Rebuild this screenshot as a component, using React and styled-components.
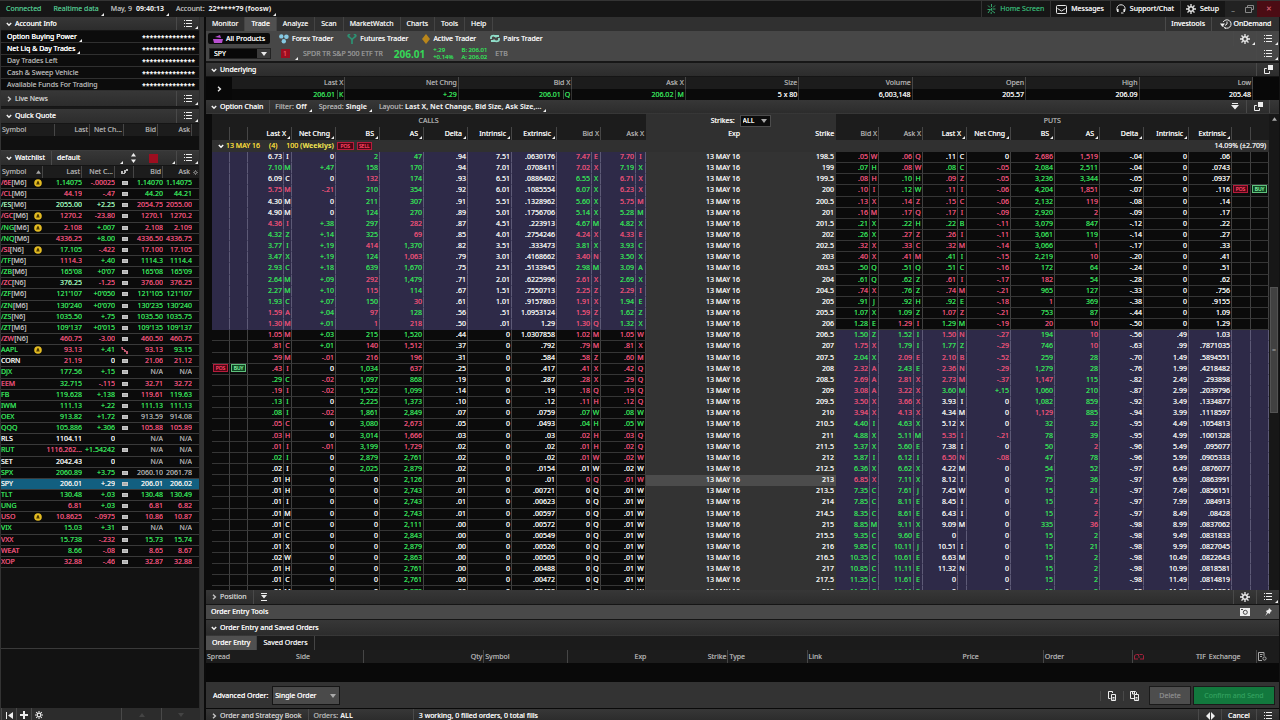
import React, { useState } from "react";
import styled, { createGlobalStyle, css } from "styled-components";

const GREEN = "#35d957";
const RED = "#e04f76";
const WHITE = "#ebebeb";
const MUTED = "#a4a4a4";
const TONES = { g: GREEN, r: RED, w: WHITE, m: MUTED, l: "#9be8b4" };

const GlobalStyle = createGlobalStyle`
  * { box-sizing: border-box; }
  body {
    margin: 0;
    background: #111;
    color: ${WHITE};
    font-family: "Noto Sans", "Open Sans", sans-serif;
    font-size: 7px;
    line-height: 10px;
    text-shadow: 0 0 0 currentColor;
    overflow: hidden;
  }
  b, strong { text-shadow: none; }
  button, input, select { font: inherit; color: inherit; text-shadow: inherit; margin: 0; padding: 0; border: 0; background: none; }
  button { cursor: pointer; white-space: nowrap; }
  table { border-collapse: separate; border-spacing: 0; table-layout: fixed; width: 100%; }
  th, td { padding: 0; font-weight: normal; white-space: nowrap; overflow: hidden; }
  svg { display: block; flex: none; }
`;

const Screen = styled.div`
  display: flex;
  flex-direction: column;
  height: 100vh;
`;

const corner = css`
  position: relative;
  &::after {
    content: "";
    position: absolute;
    right: 1px;
    bottom: 1px;
    border-left: 3px solid transparent;
    border-bottom: 3px solid #eee;
  }
`;

const TopBar = styled.header`
  display: flex;
  flex: none;
  height: 17px;
  border-top: 1px solid #343434;
  background: #161616;
`;

const TopItem = styled.button`
  display: flex;
  align-items: center;
  gap: 4px;
  padding: 0 6px 0 5px;
  color: ${(p) => p.$color || "#e8e8e8"};
  border-left: 1px solid ${(p) => (p.$line ? "#333" : "transparent")};
  ${(p) => p.$corner && corner}
  b { color: #eee; }
`;

const WindowButton = styled.button`
  display: flex;
  align-items: center;
  justify-content: center;
  width: ${(p) => (p.$close ? 23 : 16)}px;
  color: ${(p) => (p.$close ? "#c05565" : "#888")};
  background: ${(p) => (p.$close ? "#4b0c14" : "#222")};
`;

const Spacer = styled.div`
  flex: 1;
`;

const Columns = styled.div`
  display: flex;
  flex: 1;
  min-height: 0;
`;

const Sidebar = styled.aside`
  display: flex;
  flex-direction: column;
  flex: none;
  width: 200px;
  border-left: 1px solid #333;
  border-right: 1px solid #2c2c2c;
  background: #121212;
`;

const Divider = styled.div`
  flex: none;
  width: 6px;
  background: #333;
  border-right: 2px solid #0b0b0b;
`;

const Main = styled.main`
  display: flex;
  flex-direction: column;
  flex: 1;
  min-width: 0;
  padding-right: 1px;
`;

const Head = styled.div`
  display: flex;
  flex: none;
  height: ${(p) => p.$h || 15}px;
  border-bottom: 1px solid ${(p) => (p.$flat ? "transparent" : "#151515")};
  background: ${(p) => p.$bg || "linear-gradient(#373737, #2c2c2c)"};
`;

const HeadTitle = styled.button`
  display: flex;
  align-items: center;
  gap: 3px;
  padding: 0 6px 0 5px;
  color: ${(p) => (p.$dim ? "#c4c4c4" : "#f2f2f2")};
`;

const HeadItem = styled.button`
  display: flex;
  align-items: center;
  gap: 2px;
  padding: 0 6px 0 5px;
  flex: ${(p) => (p.$grow ? 1 : "none")};
  color: ${(p) => (p.$bright ? "#eee" : "#a8a8a8")};
  b { color: #eee; }
  border-left: 1px solid ${(p) => (p.$line ? "#4a4a4a" : "transparent")};
  ${(p) => p.$corner && corner}
`;

const IconButton = styled.button`
  display: flex;
  align-items: center;
  justify-content: center;
  width: ${(p) => p.$w || 23}px;
  color: ${(p) => p.$color || "#eee"};
  border-left: 1px solid ${(p) => p.$line || "#494949"};
  ${(p) => p.$corner && corner}
`;

const AccountList = styled.dl`
  flex: none;
  margin: 0;
  background: #0c0c0c;
`;

const AccountRow = styled.div`
  display: flex;
  align-items: center;
  justify-content: space-between;
  height: 12px;
  padding: 0 4px 0 6px;
  border-bottom: 1px solid #303030;
  color: ${(p) => (p.$bright ? "#fff" : MUTED)};
  dt { padding-right: 5px; ${(p) => p.$bright && corner} }
  dt::after { right: 0; bottom: 0; }
  dd { margin: 0; color: #fff; line-height: 9px; padding-top: 2px; }
`;

const HeaderCell = styled.th`
  height: ${(p) => p.$h || 12}px;
  padding: 0 ${(p) => (p.$corner ? 5 : 1)}px 0 1px;
  color: ${(p) => (p.$bright ? "#eee" : MUTED)};
  text-align: ${(p) => p.$align || "right"};
  background: ${(p) => p.$bg || "#1c1c1c"};
  border-right: 1px solid ${(p) => (p.$line ? "#464646" : "transparent")};
  svg { display: inline-block; vertical-align: middle; }
  ${(p) => p.$corner && corner}
`;

const QuickBody = styled.div`
  flex: none;
  height: 15px;
  background: #101010;
  border-bottom: 1px solid #3c3c3c;
`;

const Gap = styled.div`
  flex: none;
  height: 2px;
  background: #181818;
`;

const WatchTable = styled.table`
  height: 402px;
  flex: none;
  background: #0b0b0b;
  td { border-bottom: 1px solid #3a3a3a; line-height: 10px; }
`;

const WatchCell = styled.td`
  text-align: ${(p) => p.$align || "right"};
  color: ${(p) => TONES[p.$tone] || "inherit"};
  background: ${(p) => (p.$selected ? "#125f80" : "transparent")};
  span { color: #b4b4b4; }
  svg { margin: 0 auto; }
`;

const SideFill = styled.div`
  flex: 1;
  border-bottom: 1px solid #3a3a3a;
`;

const SideFoot = styled.div`
  flex: none;
  height: 59px;
`;

const SideTools = styled.div`
  display: flex;
  flex: none;
  height: 12px;
  background: #2c2c2c;
  overflow: hidden;
  > button { height: 14px; }
`;

const Tab = styled.button`
  padding: 0 6px;
  color: ${(p) => (p.$on ? "#f2f2f2" : "#e4e4e4")};
  background: ${(p) => (p.$on ? "#505050" : "transparent")};
  border-right: 1px solid #444;
`;

const ToolRow = styled.div`
  display: flex;
  flex: none;
  align-items: stretch;
  height: ${(p) => p.$h}px;
  background: ${(p) => p.$bg};
  border-bottom: ${(p) => (p.$last ? "2px solid #171717" : "0")};
`;

const Product = styled.button`
  display: flex;
  align-items: center;
  gap: 3px;
  margin: 2px 2px 2px 2px;
  padding: 0 5px 0 5px;
  border-radius: 2px;
  color: #eee;
  background: ${(p) => (p.$on ? "#0b0b0b" : "transparent")};
`;

const SymbolBox = styled.div`
  display: flex;
  margin: 2px 0 2px 3px;
  width: 62px;
  background: #080808;
  border: 1px solid #222;
  input { flex: 1; width: 20px; padding-left: 4px; outline: none; }
  button { width: 13px; background: #3b3b3b; display: flex; align-items: center; justify-content: center; }
`;

const RedLink = styled.button`
  align-self: center;
  width: 9px;
  height: 9px;
  background: #9c0e20;
  color: #e64a58;
  line-height: 9px;
  text-align: center;
`;

const SymbolLink = styled.span`
  display: flex;
  justify-content: center;
  width: 28px;
  ${corner}
`;

const Quote = styled.div`
  display: flex;
  align-items: center;
  gap: 8px;
  padding-left: 4px;
  color: #929292;
  strong { color: ${GREEN}; font-size: 10px; padding-left: 3px; }
`;

const Stack = styled.div`
  display: flex;
  flex-direction: column;
  color: ${GREEN};
  font-size: 6px;
  line-height: 7px;
`;

const Underlying = styled.div`
  display: flex;
  flex: none;
  height: 23px;
  background: #080808;
  td { height: 11px; text-align: right; color: ${WHITE}; padding-right: 1px; background: #0a0a0a; border-right: 1px solid #333; }
  td.up { color: ${GREEN}; }
  td i { font-style: normal; border-left: 1px solid #3b5a40; padding-left: 1px; margin-left: 2px; }
`;

const UnderSide = styled.button`
  flex: none;
  display: flex;
  align-items: center;
  justify-content: center;
  width: 26px;
`;

const Chain = styled.div`
  display: flex;
  flex: 1;
  min-height: 0;
  padding-left: 6px;
  background: #0b0b0b;
`;

const ChainTables = styled.div`
  display: flex;
  flex-direction: column;
  flex: 1;
  min-width: 0;
`;

const StrikePick = styled.label`
  display: flex;
  align-items: center;
  justify-content: center;
  gap: 5px;
  color: #eee;
`;

const SelectBox = styled.span`
  position: relative;
  display: inline-flex;
  align-items: center;
  width: ${(p) => p.$w}px;
  height: ${(p) => p.$h}px;
  background: ${(p) => p.$bg};
  border: 1px solid ${(p) => p.$edge};
  select { appearance: none; width: 100%; height: 100%; padding-left: 2px; outline: none; }
  svg { position: absolute; right: 3px; top: calc(50% - 2px); pointer-events: none; color: #aaa; }
`;

const Expiry = styled.div`
  display: flex;
  flex: none;
  align-items: center;
  height: 12px;
  padding: 0 3px 0 6px;
  background: #303030;
  color: #ecd43a;
  button { display: flex; align-items: center; gap: 2px; color: #ecd43a; }
  button svg { color: #fff; }
  b { color: #f3e550; }
  em { margin-left: auto; color: #e4e4e4; font-style: normal; }
`;

const ExpiryParts = styled.span`
  display: flex;
  gap: 9px;
  margin-right: 2px;
`;

const Badge = styled.button`
  && {
    display: inline-block;
    vertical-align: top;
    width: ${(p) => p.$w || 15}px;
    height: 8px;
    margin: 0 2px 0 1px;
    border: 1px solid ${(p) => (p.$buy ? "#5fc07c" : "#b81c3c")};
    background: ${(p) => (p.$buy ? "#0d4421" : "#4c0715")};
    color: ${(p) => (p.$buy ? "#7fe39c" : "#f0405f")};
    font-size: 5px;
    line-height: 6px;
    text-align: center;
  }
`;

const ChainView = styled.div`
  flex: 1;
  min-height: 0;
  overflow: hidden;
`;

const ChainTable = styled.table`
  height: 446px;
  tr { height: 11px; }
`;

const zones = {
  itm: ["#2e2a48", "#2e2a48", "#5d5a76"],
  otm: ["#0b0b0b", "#363636", "#414141"],
  mid: ["#333", "#333", "#333"],
  hot: ["#4c4c4c", "#4c4c4c", "#4c4c4c"],
};

const Cell = styled.td`
  line-height: 10px;
  text-align: ${(p) => (p.$center ? "center" : "right")};
  padding-right: ${(p) => (p.$center ? 0 : 1)}px;
  color: ${(p) => TONES[p.$tone || "w"]};
  background: ${(p) => zones[p.$zone][0]};
  border-bottom: 1px solid ${(p) => zones[p.$zone][1]};
  border-right: 1px solid ${(p) => zones[p.$zone][2]};
`;

const Scroll = styled.div`
  flex: none;
  display: flex;
  flex-direction: column;
  align-items: center;
  width: 10px;
  background: #171717;
  padding-top: 3px;
  color: #aaa;
`;

const Thumb = styled.div`
  width: 8px;
  height: 126px;
  margin-top: 166px;
  background: #414141;
  border: 1px solid #535353;
  display: flex;
  align-items: center;
  justify-content: center;
  color: #888;
`;

const OrderBody = styled.div`
  flex: none;
  height: 19px;
  background: #090909;
`;

const Advanced = styled.div`
  display: flex;
  flex: none;
  align-items: center;
  height: 27px;
  padding: 1px 4px 0 7px;
  background: #333;
  border-bottom: 1px solid #0a0a0a;
  label { display: flex; align-items: center; gap: 4px; color: #f2f2f2; }
`;

const ActionButton = styled.button`
  width: ${(p) => p.$w}px;
  height: 19px;
  margin-left: ${(p) => (p.$send ? 2 : 3)}px;
  border: 1px solid #1a1a1a;
  background: ${(p) => (p.$send ? "#12783d" : "#4d4d4d")};
  color: ${(p) => (p.$send ? "#2d9a59" : "#868686")};
`;

const Status = styled(Head)`
  height: 11px;
  border: 0;
  overflow: hidden;
  align-items: flex-start;
  > button { height: 14px; }
`;

const StatusGap = styled.span`
  width: 54px;
`;

/* icons */

const Chevron = ({ right }) => (
  <svg width="6" height="6" viewBox="0 0 6 6" fill="none" stroke="currentColor" strokeWidth="1.4">
    <path d={right ? "M2 .8 4.4 3 2 5.2" : "M.8 2 3 4.3 5.2 2"} />
  </svg>
);

const Arrow = ({ up, size = 6 }) => (
  <svg width={size} height="4" viewBox="0 0 6 4" fill="currentColor">
    <path d={up ? "M0 4 3 0 6 4z" : "M0 0h6L3 4z"} />
  </svg>
);

const ToStrike = () => (
  <svg width="8" height="7" viewBox="0 0 8 7" fill="currentColor">
    <path d="M1 0h6v1H1zM0 2h8L4 6.5z" />
  </svg>
);

const ListIcon = () => (
  <svg width="8" height="8" viewBox="0 0 8 8" fill="currentColor">
    <path d="M0 0h1v1H0zM2 0h6v1H2zM0 3h1v1H0zM2 3h6v1H2zM0 6h1v1H0zM2 6h6v1H2z" />
  </svg>
);

const Gear = ({ size = 10 }) => (
  <svg width={size} height={size} viewBox="0 0 10 10" fill="none" stroke="currentColor">
    <circle cx="5" cy="5" r="2.3" strokeWidth="1.5" />
    <path d="M5 0v2M5 8v2M0 5h2M8 5h2M1.5 1.5l1.3 1.3M7.2 7.2l1.3 1.3M8.5 1.5 7.2 2.8M2.8 7.2 1.5 8.5" strokeWidth="1.3" />
  </svg>
);

const Popout = () => (
  <svg width="9" height="9" viewBox="0 0 9 9" fill="none" stroke="currentColor">
    <path d="M4 0h5v5H4z" fill="currentColor" stroke="none" />
    <path d="M2.8 3.5H.5v5h5V6.2" />
  </svg>
);

const RestoreIcon = () => (
  <svg width="9" height="8" viewBox="0 0 9 8" fill="none" stroke="currentColor">
    <path d="M2.5 2.5v-2h6v4h-2M.5 2.5h6v5h-6z" />
  </svg>
);

const Walker = () => (
  <svg width="9" height="10" viewBox="0 0 9 10" fill="none" stroke="currentColor">
    <path d="M4.5 0v3M1 1.5l2 2M8 1.5l-2 2M.5 5.5h3L1 9M4.5 4v2.5L8 9M5.5 5h3M4.2 8v2" />
  </svg>
);

const Mail = () => (
  <svg width="11" height="9" viewBox="0 0 11 9" fill="none" stroke="currentColor">
    <rect x=".5" y=".5" width="10" height="8" rx="1" />
    <path d="m1.5 3.5 4 2.5 4-2.5" />
  </svg>
);

const Headset = () => (
  <svg width="10" height="10" viewBox="0 0 10 10" fill="none" stroke="currentColor">
    <path d="M1.7 7.5C0 5 1 .8 5 .8S10 5 8.3 7.5" />
    <path d="M1.8 5v3M8.2 5v3" strokeWidth="1.6" />
    <path d="M7.5 9H5" />
  </svg>
);

const Clock = () => (
  <svg width="12" height="10" viewBox="0 0 12 10" fill="none" stroke="currentColor">
    <path d="M3.5 7.5A4.2 4.2 0 1 0 3.2 3M7 2.5V5L5 6.5M4.5 9l1.3.6" />
    <path d="M0 4.5h5L2.4 8z" fill="currentColor" stroke="none" />
  </svg>
);

const LinkDots = () => (
  <svg width="7" height="6" viewBox="0 0 7 6" fill="#bbb">
    <path d="M0 2h2v3H0zM3 1h2v3H3zM5 0h2v2H5zM1 4h3v1H1z" />
  </svg>
);

const BrokenLink = () => (
  <svg width="7" height="7" viewBox="0 0 7 7" fill="#c25a72">
    <path d="M0 0h2v2h2v1h1v1h2v3H5V5H3V3H1z" />
  </svg>
);

const Dash = () => (
  <svg width="6" height="4" viewBox="0 0 6 4">
    <path d="M0 0h6v4H0z" fill="#c8c8c8" />
    <path d="M1 2h4" stroke="#777" strokeWidth=".6" />
  </svg>
);

const Bell = () => (
  <svg width="8" height="8" viewBox="0 0 8 8">
    <circle cx="4" cy="4" r="3.8" fill="#e3bb22" />
    <path d="M2 5.6c1-.6.7-3.6 2-3.6s1 3 2 3.6z" fill="#4c3900" />
  </svg>
);

const AllIcon = () => (
  <svg width="10" height="10" viewBox="0 0 10 10" fill="#b84fd0">
    <path d="M0 5h10l-1 4H1zM2 3l5-2 1 3z" />
  </svg>
);

const ForexIcon = () => (
  <svg width="10" height="10" viewBox="0 0 10 10" fill="#86c8e2">
    <circle cx="2.3" cy="2.4" r="2.2" />
    <circle cx="7.4" cy="2.8" r="2.3" />
    <circle cx="4.8" cy="7.2" r="2.2" />
  </svg>
);

const FuturesIcon = () => (
  <svg width="10" height="10" viewBox="0 0 10 10" fill="none" stroke="#2d9273" strokeWidth="1.7">
    <path d="M1 1.2C1 4 5 3 5 6.5V10M9 1.2C9 4 5 3 5 6.5M3 0 1 1.5M7 0l2 1.5" />
  </svg>
);

const ActiveIcon = () => (
  <svg width="8" height="10" viewBox="0 0 8 10" fill="#b9861b">
    <path d="m4 0 4 5-4 5-4-5z" />
  </svg>
);

const PairsIcon = () => (
  <svg width="10" height="9" viewBox="0 0 10 9" fill="none" stroke="#8fdcc8" strokeWidth="1.8">
    <path d="M1 5V3.5C1 1 6 1 6 3.5M9 4v1.5C9 8 4 8 4 5.5M4 2h5M1 7h4" />
  </svg>
);

const CopyIcon = ({ save }) => (
  <svg width="10" height="10" viewBox="0 0 10 10" fill="none" stroke="currentColor">
    <path d={save ? "M4 7.5H.5v-7h5l1 1V3M2.5.5V3h2V.5" : "M3.5 7.5h-2v-7h4V2"} />
    <path d="M4.5 3.5h4v6h-4zM5.5 6.5h2M5.5 8h2" />
  </svg>
);

const Camera = () => (
  <svg width="10" height="8" viewBox="0 0 10 8">
    <path d="M0 0h10v8H0z" fill="#eee" />
    <circle cx="5.3" cy="4.3" r="2" fill="none" stroke="#444" />
    <path d="M1 1.5h2" stroke="#444" />
  </svg>
);

const Pin = () => (
  <svg width="7" height="8" viewBox="0 0 7 8" fill="currentColor">
    <path d="M4 0l3 3-1.3.4L4.6 6 3 4.9.4 8 2 4.3.8 3l2.7-1.3z" />
  </svg>
);

const NoteIcon = () => (
  <svg width="9" height="9" viewBox="0 0 9 9" fill="none" stroke="#aaa">
    <path d="M4 8.5H.5v-8H6V4M2 2.5h2.5M2 4.5h2" />
    <circle cx="6.5" cy="6.5" r="1.6" />
  </svg>
);

const RedBadgeIcon = () => (
  <svg width="10" height="7" viewBox="0 0 10 7" fill="none" stroke="#a3213b">
    <path d="M.5 6V2.5l2-1h2V3M5.5 1.5h3l1 1V6M0 6h4M6 6h4M4 4h2" />
  </svg>
);

/* data */

const STARS = "**************";

const ACCOUNT = [
  ["Option Buying Power", true],
  ["Net Liq & Day Trades", true],
  ["Day Trades Left", false],
  ["Cash & Sweep Vehicle", false],
  ["Available Funds For Trading", false],
];

const rows = (text) => text.trim().split("\n").map((line) => line.split("|"));

// symbol | contract | alert | last | change | link | bid | ask, each value led by its tone
const WATCH = rows(`
r/6E|[M6]|a|g1.14075|r-.00025|d|g1.14070|g1.14075
r/CL|[M6]||r44.19|r-.47|d|g44.20|g44.21
l/ES|[M6]||l2055.00|l+2.25|d|r2054.75|r2055.00
r/GC|[M6]|a|r1270.2|r-23.80|d|r1270.1|r1270.2
g/NG|[M6]|a|r2.108|g+.007|d|r2.108|r2.109
g/NQ|[M6]||r4336.25|g+8.00|d|r4336.50|r4336.75
r/SI|[N6]|a|g17.105|r-.422|d|r17.100|r17.105
g/TF|[M6]||r1114.3|g+.40|d|g1114.3|g1114.4
g/ZB|[M6]||g165'08|g+0'07|d|g165'08|g165'09
r/ZC|[N6]||l376.25|r-1.25|d|r376.00|r376.25
g/ZF|[M6]||g121'107|g+0'050|d|g121'105|g121'107
g/ZN|[M6]||g130'240|g+0'070|d|g130'235|g130'240
g/ZS|[N6]||g1035.50|g+.75|d|g1035.50|g1035.75
g/ZT|[M6]||g109'137|g+0'015|d|g109'135|g109'137
r/ZW|[N6]||r460.75|r-3.00|d|r460.50|r460.75
gAAPL||a|r93.13|g+.41|b|r93.13|g93.15
wCORN|||r21.19|w0|d|r21.06|r21.12
gDJX|||g177.56|g+.15|d|mN/A|mN/A
rEEM|||g32.715|r-.115|d|r32.71|r32.72
gFB|||g119.628|g+.138|d|r119.61|g119.63
gIWM|||g111.13|g+.22|d|g111.13|g111.13
gOEX|||g913.82|g+1.72|d|m913.59|m914.08
gQQQ|||g105.886|g+.306|d|r105.88|r105.89
wRLS|||w1104.11|w0||mN/A|mN/A
gRUT|||r1116.262...|g+1.54242|d|mN/A|mN/A
wSET|||w2042.43|w0||mN/A|mN/A
gSPX|||g2060.89|g+3.75|d|m2060.10|m2061.78
wSPY|||w206.01|w+.29|d|w206.01|w206.02
gTLT|||g130.48|g+.03|d|g130.48|g130.49
gUNG|||r6.81|g+.03|d|r6.81|r6.82
rUSO||a|r10.8625|r-.0975|d|r10.86|r10.87
gVIX|||g15.03|g+.31|d|mN/A|mN/A
rVXX|||g15.738|r-.232|d|g15.73|g15.74
rWEAT|||g8.66|r-.08|d|r8.65|r8.67
rXOP|||r32.88|r-.46|d|r32.87|r32.88
`);

// calls: last | net | bs | as | delta | intrinsic | extrinsic | bid | ask
const CALLS = rows(`
w6.73 I|w0|g2|g47|w.94|w7.51|w.0630176|r7.47 E|r7.70 I
g7.10 M|g+.47|g158|g170|w.94|w7.01|w.0708411|r7.02 X|g7.19 X
w6.09 C|w0|r132|g174|w.93|w6.51|w.0886402|g6.55 X|r6.71 X
r5.75 M|r-.21|g210|g354|w.92|w6.01|w.1085554|g6.07 X|r6.23 X
w4.30 M|w0|g211|g307|w.91|w5.51|w.1328962|g5.60 X|r5.75 M
w4.90 M|w0|g124|g270|w.89|w5.01|w.1756706|g5.14 X|g5.28 M
r4.36 I|g+.38|g297|r282|w.87|w4.51|w.223913|g4.67 M|g4.82 X
g4.32 Z|g+.14|g325|r69|w.85|w4.01|w.2754246|r4.24 X|r4.33 E
g3.77 I|g+.19|r414|g1,370|w.82|w3.51|w.333473|g3.81 X|g3.93 C
g3.47 X|g+.19|g124|r1,063|w.79|w3.01|w.4168662|r3.40 N|g3.50 X
g2.93 C|g+.18|g639|g1,670|w.75|w2.51|w.5133945|g2.98 M|g3.09 A
g2.64 M|g+.09|r292|g1,479|w.71|w2.01|w.6225996|r2.61 X|g2.69 X
g2.27 M|g+.10|r115|g114|w.67|w1.51|w.7550713|r2.25 Z|r2.29 I
g1.93 C|g+.07|g150|r30|w.61|w1.01|w.9157803|r1.91 X|g1.94 E
r1.59 A|g+.04|r97|g128|w.56|w.51|w1.0953124|r1.59 Z|g1.62 Z
r1.30 M|g+.01|r1|r218|w.50|w.01|w1.29|r1.30 Q|g1.32 X
r1.05 M|g+.03|g215|g1,520|w.44|w0|w1.0307858|r1.02 M|r1.05 W
r.81 C|g+.01|r140|r1,512|w.37|w0|w.792|r.79 M|r.81 X
r.59 M|r-.01|r216|r196|w.31|w0|w.584|r.58 Z|r.60 M
r.43 I|w0|g1,034|r637|w.25|w0|w.417|r.41 X|r.42 Q
g.29 C|r-.02|g1,097|g868|w.19|w0|w.287|r.28 X|r.29 Q
r.19 I|r-.02|g1,522|g1,099|w.14|w0|w.19|r.18 Q|r.19 Q
g.13 I|w0|g2,225|g1,373|w.10|w0|w.12|r.11 H|r.12 Q
g.08 I|r-.02|g1,861|g2,849|w.07|w0|w.0759|g.07 W|g.08 W
r.05 C|w0|g3,080|r2,673|w.05|w0|w.0493|g.04 H|g.05 W
r.03 H|w0|g3,014|r1,666|w.03|w0|w.03|r.02 H|r.03 Q
r.01 I|r-.01|g3,199|r1,729|w.02|w0|w.02|r.01 H|r.02 Q
g.02 I|w0|g2,879|g2,761|w.02|w0|w.02|r.01 W|r.02 W
w.02 I|w0|g2,025|g2,879|w.02|w0|w.0154|w.01 W|w.02 W
w.01 H|w0|w0|g2,126|w.01|w0|w.01|r0 Q|r.01 W
w.01 H|w0|w0|g2,743|w.01|w0|w.00721|w0 Q|w.01 W
w.01 I|w0|w0|g2,743|w.01|w0|w.00623|w0 Q|w.01 W
w.01 M|w0|w0|g2,743|w.01|w0|w.00597|w0 Q|w.01 W
w.01 C|w0|w0|g2,111|w.00|w0|w.00572|w0 Q|w.01 W
w.01 C|w0|w0|g2,843|w.00|w0|w.00549|w0 Q|w.01 W
w.01 X|w0|w0|g2,879|w.00|w0|w.00526|w0 Q|w.01 W
w.02 W|w0|w0|g2,863|w.00|w0|w.00505|w0 Q|w.01 W
w.01 H|w0|w0|g2,761|w.00|w0|w.00488|w0 Q|w.01 W
w.01 C|w0|w0|g2,761|w.00|w0|w.00472|w0 Q|w.01 W
w.01 M|w0|w0|g2,879|w.00|w0|w.00458|w0 Q|w.01 W
`);

// puts: bid | ask | last | net | bs | as | delta | intrinsic | extrinsic
const PUTS = rows(`
r.05 W|r.06 Q|w.11 C|w0|r2,686|r1,519|w-.04|w0|w.06
g.07 H|r.08 W|g.08 C|r-.05|g2,084|g2,511|w-.04|w0|w.0743
r.08 H|g.10 H|r.09 Z|r-.05|g3,236|g3,344|w-.05|w0|w.0937
r.10 I|g.12 W|r.11 I|r-.06|g4,204|r1,851|w-.07|w0|w.116
r.13 X|r.14 Z|r.15 C|r-.06|g2,132|r119|w-.08|w0|w.14
r.16 M|r.17 Q|r.17 I|r-.09|g2,920|r2|w-.09|w0|w.17
g.21 X|g.22 H|g.22 B|r-.11|g3,079|g847|w-.12|w0|w.22
g.26 X|r.27 Z|r.26 I|r-.11|g3,061|g119|w-.14|w0|w.27
r.32 X|r.33 C|r.32 M|r-.14|g3,066|r1|w-.17|w0|w.33
r.40 X|r.41 M|g.41 I|r-.15|g2,219|r10|w-.20|w0|w.41
g.50 Q|g.51 Q|g.51 C|r-.16|g172|g64|w-.24|w0|w.51
g.61 Q|g.62 Z|r.61 I|r-.17|r182|g54|w-.28|w0|w.62
r.74 X|g.76 Z|r.74 M|r-.21|g965|g127|w-.33|w0|w.756
g.91 J|g.92 H|g.92 E|r-.18|r1|g369|w-.38|w0|w.9155
g1.07 X|g1.09 Z|r1.07 Z|r-.21|g753|g87|w-.44|w0|w1.09
g1.28 E|r1.29 I|g1.29 M|r-.19|r20|r10|w-.50|w0|w1.29
g1.50 Z|g1.52 I|r1.50 N|r-.27|g194|r10|w-.56|w.49|w1.03
r1.75 X|g1.79 I|g1.77 Z|r-.29|g746|r10|w-.63|w.99|w.7871035
g2.04 X|r2.09 E|r2.10 B|r-.52|g259|g28|w-.70|w1.49|w.5894551
r2.32 A|g2.43 E|r2.36 N|r-.29|g1,279|g28|w-.76|w1.99|w.4218482
r2.69 A|r2.81 X|r2.73 M|r-.37|r1,147|g115|w-.82|w2.49|w.293898
r3.08 A|r3.22 X|g3.60 M|g+.15|g1,060|g210|w-.87|w2.99|w.2039796
r3.50 X|r3.66 X|w3.93 I|w0|g1,082|g859|w-.92|w3.49|w.1334877
r3.94 X|r4.13 X|w4.34 M|w0|r1,129|g885|w-.94|w3.99|w.1118597
g4.40 I|g4.63 X|w5.12 X|w0|g32|g32|w-.95|w4.49|w.1054813
g4.88 X|g5.11 M|r5.35 I|r-.21|g78|g39|w-.95|w4.99|w.1001328
g5.37 X|g5.60 E|w7.38 I|w0|g50|r2|w-.96|w5.49|w.095077
g5.87 I|g6.12 I|r6.50 N|r-.08|g47|g78|w-.96|w5.99|w.0905333
g6.36 X|g6.62 X|w4.22 M|w0|g54|g52|w-.97|w6.49|w.0876077
r6.85 X|g7.11 X|w8.12 I|w0|g75|g36|w-.97|w6.99|w.0863991
g7.35 C|g7.61 J|w7.45 W|w0|g15|g21|w-.97|w7.49|w.0856151
g7.85 C|g8.11 E|w8.45 I|w0|g15|r2|w-.97|w7.99|w.084913
g8.35 C|g8.61 E|w6.43 I|w0|g15|r2|w-.97|w8.49|w.08428
g8.85 M|g9.11 X|w9.09 M|w0|g335|r36|w-.98|w8.99|w.0837062
g9.35 C|g9.60 E|w0 |w0|g15|g2|w-.98|w9.49|w.0831833
g9.85 C|g10.11 J|w10.51 I|w0|g15|g21|w-.98|w9.99|w.0827045
g10.35 C|g10.61 E|w6.63 M|w0|g15|g2|w-.98|w10.49|w.0822643
g10.85 C|g11.11 E|w11.32 N|w0|g15|g2|w-.98|w10.99|w.0818581
g11.35 C|g11.61 E|w0 |w0|g15|g2|w-.98|w11.49|w.0814819
g11.85 C|g12.11 E|w0 |w0|g15|g2|w-.98|w11.99|w.0811224
`);

const CHAIN_COLS = [
  18, 18, 36, 8, 44, 44, 44, 44, 44, 45, 35, 9, 35, 10, 96, 94,
  34, 9, 35, 9, 35, 9, 44, 44, 45, 44, 45, 43, 19, 18,
];

const GREEKS = ["Net Chng", "BS", "AS", "Delta", "Intrinsic", "Extrinsic"];

const UNDER = [
  ["Last X", "206.01", "K"],
  ["Net Chng", "+.29", ""],
  ["Bid X", "206.01", "Q"],
  ["Ask X", "206.02", "M"],
  ["Size", "5 x 80"],
  ["Volume", "6,003,148"],
  ["Open", "205.57"],
  ["High", "206.09"],
  ["Low", "205.48"],
];

const Col = styled.col`
  width: ${(p) => p.$w}px;
`;

const Cols = ({ widths }) => (
  <colgroup>
    {widths.map((w, i) => (
      <Col key={i} $w={w} />
    ))}
  </colgroup>
);

const Title = ({ label, open = true, dim }) => (
  <HeadTitle $dim={dim}>
    <Chevron right={!open} />
    {label}
  </HeadTitle>
);

const AccountInfo = () => (
  <>
    <Head $h={14}>
      <Title label="Account Info" />
      <Spacer />
      <IconButton $corner aria-label="Account menu"><ListIcon /></IconButton>
    </Head>
    <AccountList>
      {ACCOUNT.map(([label, bright]) => (
        <AccountRow key={label} $bright={bright}>
          <dt>{label}</dt>
          <dd><b>{STARS}</b></dd>
        </AccountRow>
      ))}
    </AccountList>
    <Head $h={16}>
      <Title label="Live News" open={false} dim />
      <Spacer />
      <IconButton $corner aria-label="News menu"><ListIcon /></IconButton>
    </Head>
    <Gap />
  </>
);

const QuickQuote = () => (
  <>
    <Head>
      <Title label="Quick Quote" />
      <Spacer />
      <IconButton $corner aria-label="Quote menu"><ListIcon /></IconButton>
    </Head>
    <table>
      <Cols widths={[54, 35, 34, 34, 34, 7]} />
      <thead>
        <tr>
          <HeaderCell $align="left" $line>Symbol</HeaderCell>
          <HeaderCell $line>Last</HeaderCell>
          <HeaderCell $line>Net Ch...</HeaderCell>
          <HeaderCell $line>Bid</HeaderCell>
          <HeaderCell $line>Ask</HeaderCell>
          <HeaderCell />
        </tr>
      </thead>
    </table>
    <QuickBody />
  </>
);

const LinkSlot = styled.span`
  display: flex;
  justify-content: center;
  width: 34px;
  padding-right: 12px;
  ${corner}
`;

const Watchlist = ({ selected, onSelect }) => (
  <>
    <Head>
      <Title label="Watchlist" />
      <HeadItem $line $corner $bright $grow>default</HeadItem>
      <IconButton $w={18} $line="transparent" aria-label="Reorder">
        <svg width="5" height="10" viewBox="0 0 5 10" fill="currentColor"><path d="M0 3.5 2.5 0 5 3.5zM0 6.5 2.5 10 5 6.5z" /></svg>
      </IconButton>
      <LinkSlot><RedLink aria-label="Link group" /></LinkSlot>
      <IconButton $corner aria-label="Watchlist menu"><ListIcon /></IconButton>
    </Head>
    <WatchTable>
      <Cols widths={[31, 11, 39, 33, 19, 29, 29, 7]} />
      <thead>
        <tr>
          <HeaderCell $align="left">Symbol</HeaderCell>
          <HeaderCell $line><Arrow up size={5} /></HeaderCell>
          <HeaderCell $line>Last</HeaderCell>
          <HeaderCell $line>Net C...</HeaderCell>
          <HeaderCell $line $align="center"><LinkDots /></HeaderCell>
          <HeaderCell $line>Bid</HeaderCell>
          <HeaderCell>Ask</HeaderCell>
          <HeaderCell $align="center"><Gear size={5} /></HeaderCell>
        </tr>
      </thead>
      <tbody>
        {WATCH.map(([sym, month, alert, last, net, link, bid, ask]) => {
          const name = sym.slice(1);
          const on = name === selected;
          return (
            <tr key={name} onClick={() => onSelect(name)}>
              <WatchCell $align="left" $tone={sym[0]} $selected={on}>{name}<span>{month}</span></WatchCell>
              <WatchCell $selected={on}>{alert && <Bell />}</WatchCell>
              <WatchCell $tone={last[0]} $selected={on}>{last.slice(1)}</WatchCell>
              <WatchCell $tone={net[0]} $selected={on}>{net.slice(1)}</WatchCell>
              <WatchCell $selected={on}>{link === "d" ? <Dash /> : link === "b" ? <BrokenLink /> : null}</WatchCell>
              <WatchCell $tone={bid[0]} $selected={on}>{bid.slice(1)}</WatchCell>
              <WatchCell $tone={ask[0]} $selected={on}>{ask.slice(1)}</WatchCell>
              <WatchCell $selected={on} />
            </tr>
          );
        })}
      </tbody>
    </WatchTable>
  </>
);

const TradeBars = () => (
  <>
    <ToolRow $h={14} $bg="#303030">
      {["Monitor", "Trade", "Analyze", "Scan", "MarketWatch", "Charts", "Tools", "Help"].map((t) => (
        <Tab key={t} $on={t === "Trade"}>{t}</Tab>
      ))}
      <Spacer />
      <HeadItem $line $bright>Investools</HeadItem>
      <IconButton $w={68} aria-label="OnDemand"><Clock />&nbsp;OnDemand</IconButton>
    </ToolRow>
    <ToolRow $h={15} $bg="#474747">
      <Product $on><AllIcon />All Products</Product>
      <Product><ForexIcon />Forex Trader</Product>
      <Product><FuturesIcon />Futures Trader</Product>
      <Product><ActiveIcon />Active Trader</Product>
      <Product><PairsIcon />Pairs Trader</Product>
      <Spacer />
      <IconButton $corner aria-label="Trade settings"><Gear /></IconButton>
      <IconButton $corner aria-label="Trade menu"><ListIcon /></IconButton>
    </ToolRow>
    <ToolRow $h={17} $bg="#474747" $last>
      <SymbolBox>
        <input aria-label="Symbol" defaultValue="SPY" />
        <button aria-label="Recent symbols"><Arrow /></button>
      </SymbolBox>
      <SymbolLink><RedLink>1</RedLink></SymbolLink>
      <Quote>
        SPDR TR S&amp;P 500 ETF TR
        <strong>206.01</strong>
        <Stack><span>+.29</span><span>+0.14%</span></Stack>
        <Stack><span>B: 206.01</span><span>A: 206.02</span></Stack>
        ETB
      </Quote>
      <Spacer />
      <IconButton $corner aria-label="Symbol menu"><ListIcon /></IconButton>
    </ToolRow>
  </>
);

const UnderlyingPanel = () => (
  <>
    <Head $h={14}>
      <Title label="Underlying" />
      <Spacer />
      <IconButton aria-label="Detach underlying"><Popout /></IconButton>
    </Head>
    <Underlying>
      <UnderSide aria-label="Expand underlying"><Chevron right /></UnderSide>
      <table>
        <thead>
          <tr>
            {UNDER.map(([label]) => (
              <HeaderCell key={label} $line>{label}</HeaderCell>
            ))}
          </tr>
        </thead>
        <tbody>
          <tr>
            {UNDER.map(([label, value, ex]) => (
              <td key={label} className={ex === undefined ? "" : "up"}>
                {value}{ex && <i>{ex}</i>}
              </td>
            ))}
          </tr>
        </tbody>
      </table>
      <UnderSide as="span" />
    </Underlying>
  </>
);

const ChainHead = () => (
  <table>
    <Cols widths={CHAIN_COLS} />
    <thead>
      <tr>
        <HeaderCell $h={13} colSpan={14} $align="center">CALLS</HeaderCell>
        <HeaderCell $h={13} colSpan={2} $bg="#303030">
          <StrikePick>
            Strikes:
            <SelectBox $w={31} $h={12} $bg="#0c0c0c" $edge="#4c4c4c">
              <select defaultValue="ALL"><option>ALL</option></select>
              <Arrow />
            </SelectBox>
          </StrikePick>
        </HeaderCell>
        <HeaderCell $h={13} colSpan={14} $align="center">PUTS</HeaderCell>
      </tr>
      <tr>
        <HeaderCell $h={13} $line />
        <HeaderCell $line />
        <HeaderCell $bright $corner $line colSpan={2}>Last X</HeaderCell>
        {GREEKS.map((h) => <HeaderCell key={h} $bright $corner $line>{h}</HeaderCell>)}
        <HeaderCell $line colSpan={2}>Bid X</HeaderCell>
        <HeaderCell colSpan={2}>Ask X</HeaderCell>
        <HeaderCell $bright $bg="#303030">Exp</HeaderCell>
        <HeaderCell $bright $bg="#303030">Strike</HeaderCell>
        <HeaderCell $line colSpan={2}>Bid X</HeaderCell>
        <HeaderCell $line colSpan={2}>Ask X</HeaderCell>
        <HeaderCell $bright $corner $line colSpan={2}>Last X</HeaderCell>
        {GREEKS.map((h) => <HeaderCell key={h} $bright $corner $line>{h}</HeaderCell>)}
        <HeaderCell $line />
        <HeaderCell />
      </tr>
    </thead>
  </table>
);

const cells = (values, zone, priced) =>
  values.flatMap((v, i) => {
    const tone = v[0];
    if (!priced.includes(i)) {
      return [<Cell key={i} $zone={zone} $tone={tone}>{v.slice(1)}</Cell>];
    }
    const [price, ex] = v.slice(1).split(" ");
    return [
      <Cell key={i} $zone={zone} $tone={tone}>{price}</Cell>,
      <Cell key={i + "x"} $zone={zone} $tone={tone} $center>{ex}</Cell>,
    ];
  });

const ChainRow = ({ index }) => {
  const strike = 198.5 + index * 0.5;
  const callZone = strike <= 206 ? "itm" : "otm";
  const putZone = strike > 206 ? "itm" : "otm";
  const mid = strike === 213 ? "hot" : "mid";
  return (
    <tr>
      <Cell $zone={callZone} $center>{strike === 208 && <Badge>POS</Badge>}</Cell>
      <Cell $zone={callZone} $center>{strike === 208 && <Badge $buy>BUY</Badge>}</Cell>
      {cells(CALLS[index], callZone, [0, 7, 8])}
      <Cell $zone={mid}>13 MAY 16</Cell>
      <Cell $zone={mid}>{strike}</Cell>
      {cells(PUTS[index], putZone, [0, 1, 2])}
      <Cell $zone={putZone} $center>{strike === 200 && <Badge>POS</Badge>}</Cell>
      <Cell $zone={putZone} $center>{strike === 200 && <Badge $buy>BUY</Badge>}</Cell>
    </tr>
  );
};

const OptionChain = () => (
  <>
    <Head $h={14} $flat>
      <Title label="Option Chain" />
      <HeadItem $line $corner>Filter: <b>Off</b></HeadItem>
      <HeadItem $corner>Spread: <b>Single</b></HeadItem>
      <HeadItem $corner>Layout: <b>Last X, Net Change, Bid Size, Ask Size,...</b></HeadItem>
      <Spacer />
      <IconButton $line="transparent" aria-label="Scroll to strike"><ToStrike /></IconButton>
      <IconButton aria-label="Detach chain"><Popout /></IconButton>
      <IconButton as="span" $w={10} />
    </Head>
    <Chain>
      <ChainTables>
        <ChainHead />
        <Expiry>
          <button>
            <Chevron />
            <ExpiryParts>
              <span>13 MAY 16</span>
              <span>(4)</span>
              <span>100 <b>(Weeklys)</b></span>
            </ExpiryParts>
          </button>
          <Badge $w={17}>POS</Badge>
          <Badge>SELL</Badge>
          <em>14.09% (±2.709)</em>
        </Expiry>
        <ChainView>
          <ChainTable>
            <Cols widths={CHAIN_COLS} />
            <tbody>
              {CALLS.map((_, i) => <ChainRow key={i} index={i} />)}
            </tbody>
          </ChainTable>
        </ChainView>
      </ChainTables>
      <Scroll>
        <Arrow up size={5} />
        <Thumb>=</Thumb>
      </Scroll>
    </Chain>
  </>
);

const OrderEntry = () => (
  <>
    <Head $h={15}>
      <Title label="Position" open={false} dim />
      <IconButton $w={21} aria-label="Collapse">
        <svg width="6" height="8" viewBox="0 0 6 8" fill="currentColor"><path d="M0 0h6v1H0zM0 2h6L3 5.5zM0 7h6v1H0z" /></svg>
      </IconButton>
      <Spacer />
      <IconButton aria-label="Position settings"><Gear /></IconButton>
      <IconButton $corner aria-label="Position menu"><ListIcon /></IconButton>
    </Head>
    <Head $h={15} $bg="#494949">
      <HeadTitle>Order Entry Tools</HeadTitle>
      <Spacer />
      <IconButton aria-label="Snapshot"><Camera /></IconButton>
      <IconButton aria-label="Pin"><Pin /></IconButton>
    </Head>
    <Head $h={16} $flat>
      <Title label="Order Entry and Saved Orders" />
    </Head>
    <ToolRow $h={14} $bg="#1b1b1b">
      <Tab $on>Order Entry</Tab>
      <Tab>Saved Orders</Tab>
    </ToolRow>
    <table>
      <Cols widths={[89, 69, 120, 84, 80, 80, 79, 105, 117, 14, 89, 24, 51, 49, 22]} />
      <thead>
        <tr>
          <HeaderCell $h={13} $align="left">Spread</HeaderCell>
          <HeaderCell $line $align="left">Side</HeaderCell>
          <HeaderCell $line>Qty</HeaderCell>
          <HeaderCell $line $align="left">Symbol</HeaderCell>
          <HeaderCell>Exp</HeaderCell>
          <HeaderCell $line>Strike</HeaderCell>
          <HeaderCell $line $align="left">Type</HeaderCell>
          <HeaderCell $align="left">Link</HeaderCell>
          <HeaderCell $align="center">Price</HeaderCell>
          <HeaderCell $line />
          <HeaderCell $line $align="left">Order</HeaderCell>
          <HeaderCell $align="left"><RedBadgeIcon /></HeaderCell>
          <HeaderCell>TIF</HeaderCell>
          <HeaderCell $line $align="left">Exchange</HeaderCell>
          <HeaderCell $align="left"><NoteIcon /></HeaderCell>
        </tr>
      </thead>
    </table>
    <OrderBody />
    <Advanced>
      <label>
        Advanced Order:
        <SelectBox $w={68} $h={19} $bg="#4a4a4a" $edge="#151515">
          <select defaultValue="Single Order"><option>Single Order</option></select>
          <Arrow />
        </SelectBox>
      </label>
      <Spacer />
      <IconButton aria-label="Copy order"><CopyIcon /></IconButton>
      <IconButton aria-label="Save order"><CopyIcon save /></IconButton>
      <ActionButton $w={42}>Delete</ActionButton>
      <ActionButton $w={82} $send>Confirm and Send</ActionButton>
    </Advanced>
    <Status>
      <Title label="Order and Strategy Book" open={false} dim />
      <HeadItem $line>Orders: <b>ALL</b></HeadItem>
      <StatusGap />
      <HeadItem $line $bright>3 working, 0 filled orders, 0 total fills</HeadItem>
      <Spacer />
      <IconButton aria-label="Split"><svg width="9" height="8" viewBox="0 0 9 8" fill="currentColor"><path d="M4 0v8L0 4zM5 0v8l4-4z" /></svg></IconButton>
      <IconButton $w={35}>Cancel</IconButton>
      <IconButton aria-label="Book menu"><ListIcon /></IconButton>
    </Status>
  </>
);

export default function App() {
  const [selected, setSelected] = useState("SPY");
  return (
    <Screen>
      <GlobalStyle />
      <TopBar>
        <TopItem $color="#4cb683">Connected</TopItem>
        <TopItem $color="#4cb683" $corner>Realtime data</TopItem>
        <TopItem $color="#b0b0b0" $corner>May, 9 <b>09:40:13</b></TopItem>
        <TopItem $color="#b0b0b0" $corner>Account: <b>22*****79 (foosw)</b></TopItem>
        <Spacer />
        <TopItem $line $color="#34a56b"><Walker />Home Screen</TopItem>
        <TopItem $line><Mail />Messages</TopItem>
        <TopItem $line><Headset />Support/Chat</TopItem>
        <TopItem $line><Gear />Setup</TopItem>
        <WindowButton aria-label="Minimize">_</WindowButton>
        <WindowButton aria-label="Restore"><RestoreIcon /></WindowButton>
        <WindowButton $close aria-label="Close">✕</WindowButton>
      </TopBar>
      <Columns>
        <Sidebar>
          <AccountInfo />
          <QuickQuote />
          <Watchlist selected={selected} onSelect={setSelected} />
          <SideFill />
          <SideFoot />
          <SideTools>
            <IconButton $w={15} aria-label="First"><svg width="7" height="7" viewBox="0 0 7 7" fill="currentColor"><path d="M0 0h1v7H0zM7 0v7L2 3.5z" /></svg></IconButton>
            <IconButton $w={15} aria-label="Add"><svg width="8" height="8" viewBox="0 0 8 8" fill="currentColor"><path d="M3 0h2v3h3v2H5v3H3V5H0V3h3z" /></svg></IconButton>
            <IconButton $w={15} aria-label="Sidebar settings"><Gear size={8} /></IconButton>
            <Spacer />
            <IconButton $w={40} $color="#444" aria-label="Up"><Arrow up /></IconButton>
            <IconButton $w={38} $color="#444" aria-label="Down"><Arrow /></IconButton>
          </SideTools>
        </Sidebar>
        <Divider />
        <Main>
          <TradeBars />
          <UnderlyingPanel />
          <OptionChain />
          <OrderEntry />
        </Main>
      </Columns>
    </Screen>
  );
}
